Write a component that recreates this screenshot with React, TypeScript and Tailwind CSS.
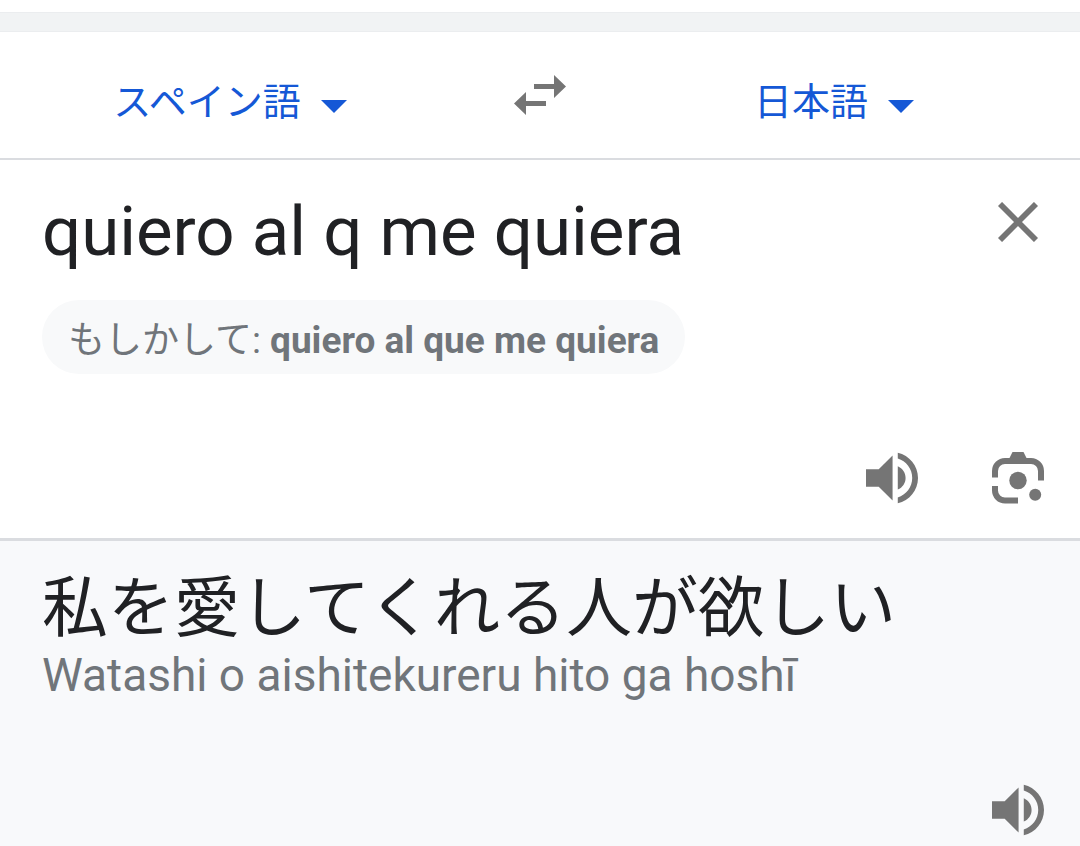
import { useState } from "react";

const LANGUAGES = ["スペイン語", "日本語"];

function LanguageSelect({
  label,
  value,
  onChange,
}: {
  label: string;
  value: string;
  onChange: (value: string) => void;
}) {
  return (
    <div className="relative flex items-center">
      <select
        aria-label={label}
        value={value}
        onChange={(e) => onChange(e.target.value)}
        className="appearance-none [field-sizing:content] cursor-pointer bg-transparent pr-[46px] text-[38px] leading-[56px] text-[#1558d6]"
      >
        {LANGUAGES.map((name) => (
          <option key={name}>{name}</option>
        ))}
      </select>
      <svg
        viewBox="0 0 26 13"
        aria-hidden="true"
        className="pointer-events-none absolute right-0 top-[26px] w-[26px] fill-[#1558d6]"
      >
        <path d="M0 0h26L13 13z" />
      </svg>
    </div>
  );
}

function SwapIcon() {
  return (
    <svg viewBox="0 0 52 40" aria-hidden="true" className="w-[52px] fill-[#757575]">
      <path d="M20 9h20V0l12 11.5L40 23v-9H20z" />
      <path d="M32 26H12v-9L0 28.5 12 40v-9h20z" />
    </svg>
  );
}

function CloseIcon() {
  return (
    <svg
      viewBox="0 0 40 40"
      aria-hidden="true"
      className="w-10 stroke-[#757575]"
      strokeWidth="5.8"
    >
      <path d="M2 2l36 36M38 2L2 38" />
    </svg>
  );
}

function SpeakerIcon() {
  return (
    <svg viewBox="3 3 18 18" aria-hidden="true" className="w-[52px] fill-[#757575]">
      <path d="M3 9v6h4.4l4.8 4.8V4.2L7.4 9H3zm13.7 3c0-1.8-1.02-3.3-2.7-4.03v8.05c1.68-.73 2.7-2.25 2.7-4.02zM14 3.23v2.06c2.89.86 5 3.54 5 6.71s-2.11 5.85-5 6.71v2.06c4.01-.91 7-4.49 7-8.77s-2.99-7.86-7-8.77z" />
    </svg>
  );
}

function LensIcon() {
  return (
    <svg viewBox="0 0 52 52" aria-hidden="true" className="w-[52px]">
      <path
        d="M3 25.5V19A10 10 0 0 1 13 9h26a10 10 0 0 1 10 10v9.5M3 34v4.5a10 10 0 0 0 10 10h13"
        fill="none"
        stroke="#757575"
        strokeWidth="6"
      />
      <path d="M17 7l3.5-7h11L35 7z" fill="#757575" />
      <circle cx="26" cy="28.5" r="8.7" fill="#757575" />
      <circle cx="43.2" cy="42.7" r="6" fill="#757575" />
    </svg>
  );
}

export default function App() {
  const [source, setSource] = useState("スペイン語");
  const [target, setTarget] = useState("日本語");
  const [text, setText] = useState("quiero al q me quiera");

  const swap = () => {
    setSource(target);
    setTarget(source);
  };

  return (
    <main
      lang="ja"
      className="flex min-h-screen flex-col bg-white pt-3 font-[Roboto,'Noto_Sans_CJK_JP',sans-serif] text-[#202124]"
    >
      <div className="h-5 border-y border-[#ebedef] bg-[#f1f3f4]" />

      {/* Languages */}
      <header className="grid h-32 grid-cols-[1fr_160px_1fr] items-center border-b-2 border-[#dadce0]">
        <div className="flex justify-center pt-[14px]">
          <LanguageSelect label="翻訳元の言語" value={source} onChange={setSource} />
        </div>
        <button
          type="button"
          aria-label="言語を入れ替える"
          onClick={swap}
          className="flex justify-center"
        >
          <SwapIcon />
        </button>
        <div className="flex justify-center pt-[14px] pr-8">
          <LanguageSelect label="翻訳先の言語" value={target} onChange={setTarget} />
        </div>
      </header>

      {/* Source text */}
      <section className="flex flex-col border-b-[3px] border-[#dadce0] pt-7 pr-9 pb-[34px] pl-[42px]">
        <div className="flex items-start justify-between">
          <textarea
            aria-label="原文"
            rows={1}
            value={text}
            onChange={(e) => setText(e.target.value)}
            className="block min-w-0 flex-1 resize-none overflow-hidden text-[69px] leading-[88px] outline-none"
          />
          <button
            type="button"
            aria-label="原文を消去"
            onClick={() => setText("")}
            className="mt-[14px] mr-[6px]"
          >
            <CloseIcon />
          </button>
        </div>
        <button
          type="button"
          onClick={() => setText("quiero al que me quiera")}
          className="mt-6 flex h-[74px] items-center self-start rounded-full bg-[#f8f9fa] px-[26px] pt-2 text-[37px] leading-[48px] text-[#70757a]"
        >
          もしかして:&nbsp;<b>quiero al que me quiera</b>
        </button>
        <div className="mt-[78px] flex justify-end gap-[74px]">
          <button type="button" aria-label="原文を聞く">
            <SpeakerIcon />
          </button>
          <button type="button" aria-label="画像で検索">
            <LensIcon />
          </button>
        </div>
      </section>

      {/* Translation */}
      <section className="flex flex-1 flex-col bg-[#f8f9fb] pt-6 pr-9 pb-[10px] pl-[42px]">
        <p className="text-[66px] leading-[88px]">私を愛してくれる人が欲しい</p>
        <p className="text-[46px] leading-[44px] text-[#70757a]">
          Watashi o aishitekureru hito ga hoshī
        </p>
        <button type="button" aria-label="翻訳を聞く" className="mt-auto self-end">
          <SpeakerIcon />
        </button>
      </section>
    </main>
  );
}
